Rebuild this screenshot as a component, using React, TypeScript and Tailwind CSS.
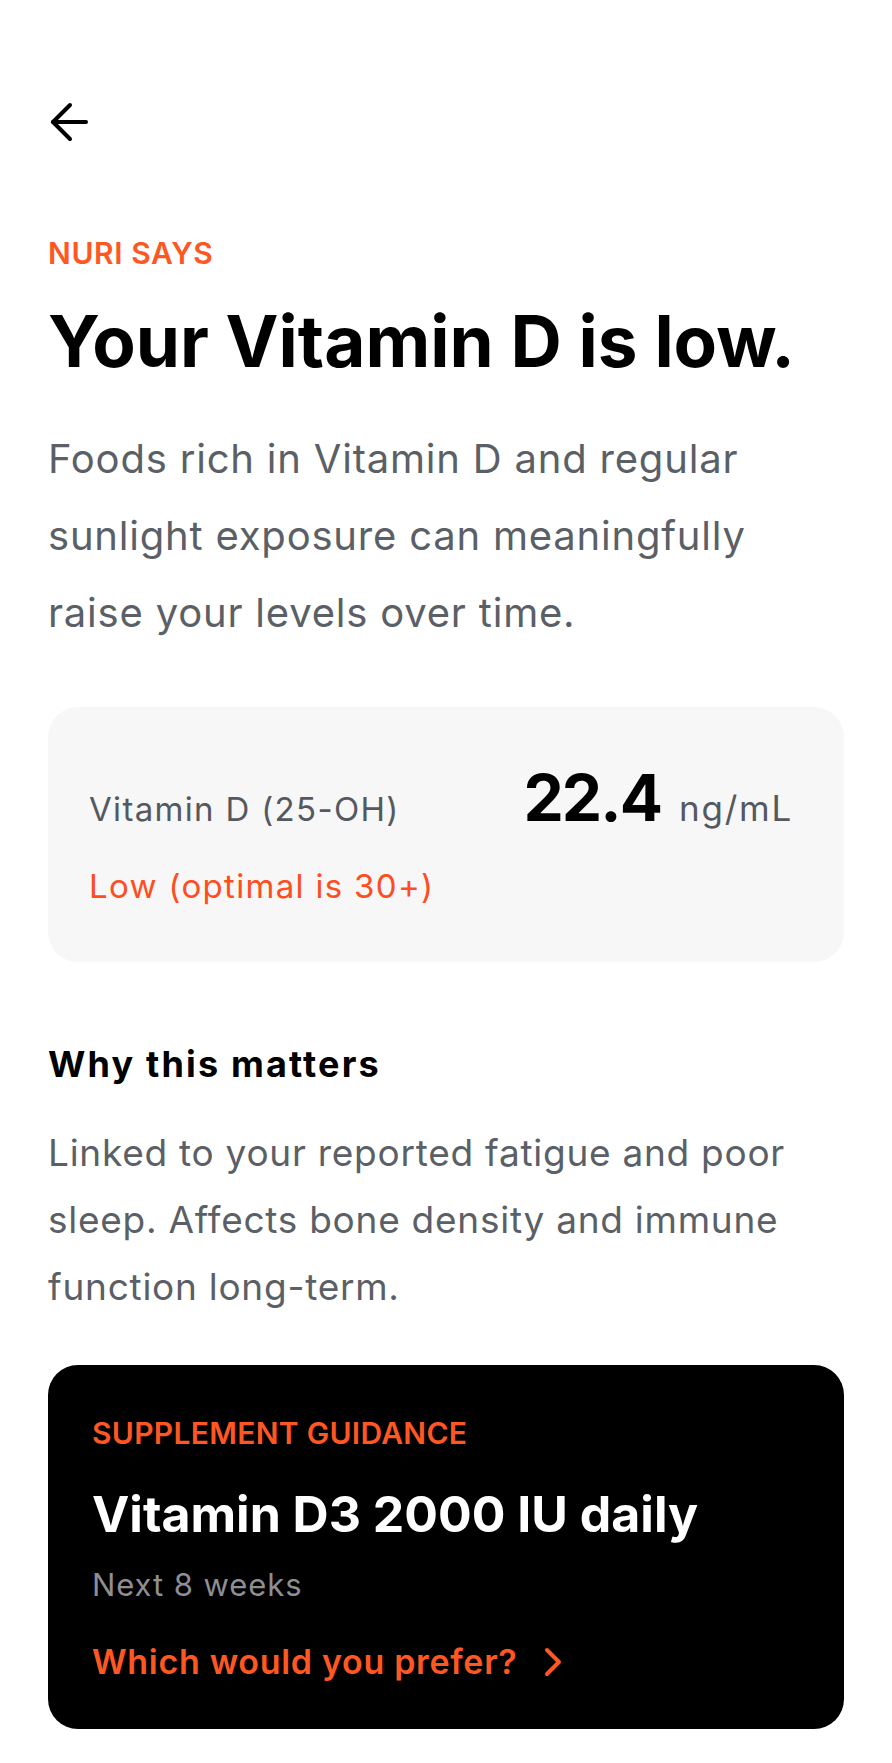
const font = { fontFamily: 'Inter, "Noto Sans", sans-serif' };

export default function App() {
  return (
    <div className="min-h-[1763px] bg-white px-[48px] pt-[102px] text-black" style={font}>
      <button className="block h-[40px] w-[40px]" aria-label="Back">
        <svg viewBox="0 0 40 40" className="h-[40px] w-[40px]" fill="none" stroke="black" strokeWidth={4} strokeLinecap="round" strokeLinejoin="round">
          <path d="M38 20H5" />
          <path d="M22 3 5 20l17 17" />
        </svg>
      </button>

      <div className="mt-[93px] text-[30px] leading-[36px] font-semibold tracking-[0.02em] text-[#ff5722]">NURI SAYS</div>
      <h1 className="mt-[35px] text-[71px] leading-[70px] font-bold">Your Vitamin D is low.</h1>
      <p className="mt-[44px] text-[40px] leading-[77px] tracking-[0.02em] text-[#5b5f66]">
        Foods rich in Vitamin D and regular sunlight exposure can meaningfully raise your levels over time.
      </p>

      <div className="mt-[56px] rounded-[30px] bg-[#f7f7f7] pl-[41px] pr-[51px] pt-[59px] pb-[56px]">
        <div className="flex items-baseline justify-between">
          <span className="text-[33px] leading-[40px] tracking-[0.04em] text-[#55595f]">Vitamin D (25-OH)</span>
          <span className="flex items-baseline gap-[18px]">
            <span className="text-[64px] leading-[64px] font-bold tracking-[-0.03em]">22.4</span>
            <span className="text-[35px] leading-[40px] tracking-[0.05em] text-[#55595f]">ng/mL</span>
          </span>
        </div>
        <div className="mt-[36px] text-[33px] leading-[40px] tracking-[0.04em] text-[#ff4d1f]">Low (optimal is 30+)</div>
      </div>

      <h2 className="mt-[82px] text-[36px] leading-[40px] font-bold tracking-[0.06em]">Why this matters</h2>
      <p className="mt-[35px] text-[37px] leading-[67px] tracking-[0.02em] text-[#5b5f66]">
        Linked to your reported fatigue and poor sleep. Affects bone density and immune function long-term.
      </p>

      <div className="mt-[45px] rounded-[30px] bg-black pl-[44px] pr-[44px] pt-[50px] pb-[47px]">
        <div className="text-[30px] leading-[36px] font-semibold tracking-[0.01em] text-[#ff5722]">SUPPLEMENT GUIDANCE</div>
        <div className="mt-[35px] text-[50px] leading-[56px] font-bold text-white">Vitamin D3 2000 IU daily</div>
        <div className="mt-[25px] text-[31px] leading-[36px] tracking-[0.03em] text-[#8e8e93]">Next 8 weeks</div>
        <button className="mt-[39px] flex items-center gap-[26px] text-[34px] leading-[40px] font-semibold tracking-[0.02em] text-[#ff5722]">
          Which would you prefer?
          <svg viewBox="0 0 20 30" className="h-[30px] w-[20px]" fill="none" stroke="currentColor" strokeWidth={4} strokeLinecap="round" strokeLinejoin="round">
            <path d="M4 3l12 12-12 12" />
          </svg>
        </button>
      </div>
    </div>
  );
}
